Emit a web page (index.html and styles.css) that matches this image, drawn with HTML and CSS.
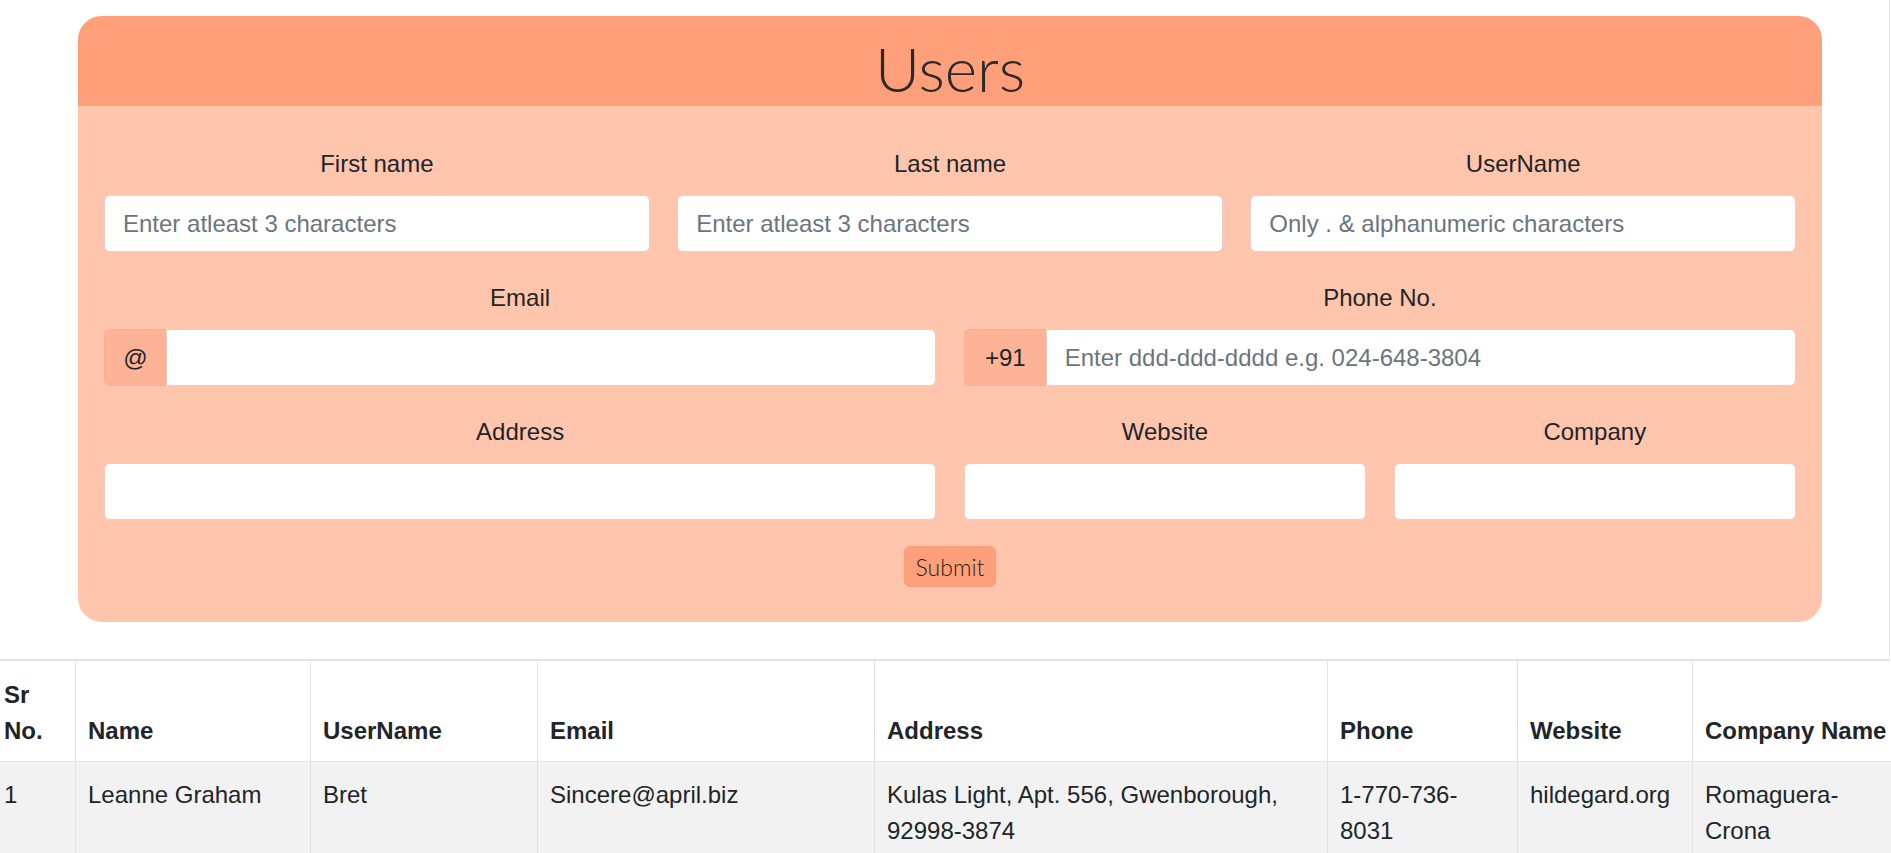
FILE: index.html
```html
<!DOCTYPE html>
<html lang="en">
<head>
<meta charset="utf-8">
<title>Users</title>
<link rel="stylesheet" href="styles.css">
</head>
<body>
<div class="top">
  <section class="card">
    <header class="card-head"><h1 class="title">Users</h1></header>
    <form class="card-body">
      <div class="grid">
        <div class="field span4">
          <label class="label">First name</label>
          <input class="input" type="text" placeholder="Enter atleast 3 characters">
        </div>
        <div class="field span4">
          <label class="label">Last name</label>
          <input class="input" type="text" placeholder="Enter atleast 3 characters">
        </div>
        <div class="field span4">
          <label class="label">UserName</label>
          <input class="input" type="text" placeholder="Only . &amp; alphanumeric characters">
        </div>
        <div class="field span6">
          <label class="label">Email</label>
          <div class="group">
            <span class="addon addon-at">@</span>
            <input class="input input-grouped" type="text">
          </div>
        </div>
        <div class="field span6">
          <label class="label">Phone No.</label>
          <div class="group">
            <span class="addon addon-phone">+91</span>
            <input class="input input-grouped" type="text" placeholder="Enter ddd-ddd-dddd e.g. 024-648-3804">
          </div>
        </div>
        <div class="field span6">
          <label class="label">Address</label>
          <input class="input" type="text">
        </div>
        <div class="field span3">
          <label class="label">Website</label>
          <input class="input" type="text">
        </div>
        <div class="field span3">
          <label class="label">Company</label>
          <input class="input" type="text">
        </div>
      </div>
      <div class="actions"><button class="btn" type="button">Submit</button></div>
    </form>
  </section>
</div>
<div class="table-wrap">
  <table class="users">
    <colgroup>
      <col class="c-sr"><col class="c-name"><col class="c-user"><col class="c-email"><col class="c-addr"><col class="c-phone"><col class="c-web"><col class="c-comp">
    </colgroup>
    <thead>
      <tr>
        <th>Sr No.</th>
        <th>Name</th>
        <th>UserName</th>
        <th>Email</th>
        <th>Address</th>
        <th>Phone</th>
        <th>Website</th>
        <th>Company Name</th>
      </tr>
    </thead>
    <tbody>
      <tr class="striped">
        <td>1</td>
        <td>Leanne Graham</td>
        <td>Bret</td>
        <td>Sincere@april.biz</td>
        <td>Kulas Light, Apt. 556, Gwenborough, 92998-3874</td>
        <td>1-770-736-8031</td>
        <td>hildegard.org</td>
        <td>Romaguera-Crona</td>
      </tr>
    </tbody>
  </table>
</div>
</body>
</html>
```
FILE: styles.css
```css
* { box-sizing: border-box; }

html, body {
  margin: 0;
  padding: 0;
  background: #ffffff;
}

body {
  font-family: "Liberation Sans", Arial, sans-serif;
  font-size: 24px;
  line-height: 36px;
  color: #212529;
  overflow-x: hidden;
}

.top {
  width: 1890px;
  border-right: 1px solid #e9e9e9;
  border-bottom: 2px solid #e2e2e2;
  padding: 16px 0 37px;
}

.card {
  margin-left: 78px;
  width: 1744px;
  border-radius: 24px;
  overflow: hidden;
  background: #ffc6ad;
}

.card-head {
  height: 90px;
  background: #ffa07a;
  padding-top: 15px;
  text-align: center;
}

.title {
  margin: 0;
  font-family: Lato, "Open Sans", sans-serif;
  font-weight: 300;
  font-size: 62px;
  line-height: 74px;
  color: #2a2a2a;
}

.card-body {
  margin: 0;
  padding: 40px 26px 35px;
}

.grid {
  display: grid;
  grid-template-columns: repeat(12, 1fr);
  column-gap: 27.5px;
  row-gap: 28px;
}

.span4 { grid-column: span 4; }
.span6 { grid-column: span 6; }
.span3 { grid-column: span 3; }

.field {
  display: flex;
  flex-direction: column;
}

.label {
  display: block;
  text-align: center;
  line-height: 36px;
  margin-bottom: 13px;
  color: #212529;
}

.input {
  display: block;
  width: 100%;
  height: 57px;
  padding: 0 18px;
  font-family: inherit;
  font-size: 24px;
  color: #495057;
  background: #ffffff;
  border: 1px solid #e6cfc4;
  border-radius: 6px;
  outline: none;
}

.input::placeholder {
  color: #6c757d;
  opacity: 1;
}

.group {
  display: flex;
  height: 57px;
}

.addon {
  flex: none;
  display: flex;
  align-items: center;
  justify-content: center;
  background: #ffb396;
  border: 1px solid #f7ae92;
  border-right: none;
  border-radius: 6px 0 0 6px;
  color: #212529;
}

.addon-at { width: 62px; }
.addon-phone { width: 82px; }

.input-grouped {
  flex: 1;
  border-radius: 0 6px 6px 0;
}

.actions {
  display: flex;
  justify-content: center;
  margin-top: 26px;
}

.btn {
  height: 41px;
  padding: 0 11px;
  font-family: Lato, "Open Sans", sans-serif;
  font-weight: 300;
  font-size: 23px;
  color: #2a1d18;
  background: #ffa07a;
  border: 1px solid #fa9c77;
  border-radius: 6px;
}

.table-wrap {
  overflow: hidden;
  width: 1891px;
}

.users {
  margin-left: -9px;
  border-collapse: collapse;
  table-layout: fixed;
  width: 1913px;
  color: #212529;
}

.c-sr { width: 84px; }
.c-name { width: 235px; }
.c-user { width: 227px; }
.c-email { width: 337px; }
.c-addr { width: 453px; }
.c-phone { width: 190px; }
.c-web { width: 175px; }
.c-comp { width: 212px; }

.users th,
.users td {
  text-align: left;
  border-left: 1px solid #e2e2e2;
  border-right: 1px solid #e2e2e2;
  padding: 15px 12px 12px 12px;
  line-height: 36px;
  vertical-align: top;
}

.users th {
  font-weight: 700;
  vertical-align: bottom;
  padding-top: 16px;
  padding-bottom: 12px;
  border-bottom: 1px solid #e2e2e2;
  background: #ffffff;
}

.striped td {
  background: #f2f2f2;
}
```
